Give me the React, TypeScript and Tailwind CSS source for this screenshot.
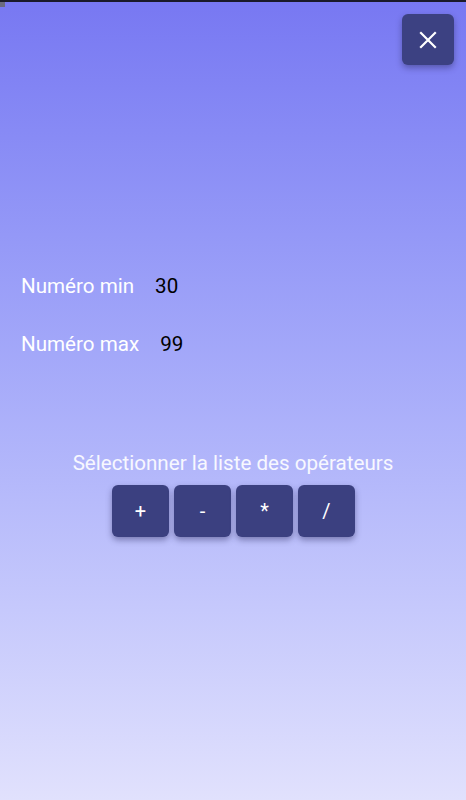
import React from "react";

export default function App() {
  const ops = ["+", "-", "*", "/"];
  return (
    <div
      className="relative w-[466px] h-[800px] overflow-hidden bg-gradient-to-b from-[#7878f2] to-[#e1e1fd] border-t-2 border-[#1a1a2a]"
      style={{ fontFamily: "Roboto, 'Noto Sans', sans-serif" }}
    >
      <div className="absolute left-0 top-0 w-[5px] h-[5px] bg-[#6b6b80]" />
      <div className="flex justify-end pt-[12px] pr-[12px]">
        <button className="w-[52px] h-[51px] rounded-[6px] bg-[#3c4182] shadow-[0_3px_6px_rgba(40,40,90,0.45)] flex items-center justify-center">
          <svg width="20" height="20" viewBox="0 0 20 20" fill="none" stroke="white" strokeWidth="2.2" strokeLinecap="square">
            <path d="M3 3 L17 17 M17 3 L3 17" />
          </svg>
        </button>
      </div>
      <div className="mt-[209px] pl-[21px] text-[20.6px] leading-[24px]">
        <div className="flex items-center">
          <span className="text-white">Numéro min</span>
          <span className="text-black ml-[21px]">30</span>
        </div>
        <div className="flex items-center mt-[34px]">
          <span className="text-white">Numéro max</span>
          <span className="text-black ml-[21px]">99</span>
        </div>
      </div>
      <div className="mt-[95px] flex flex-col items-center">
        <div className="text-[20.6px] leading-[24px] text-white/90">Sélectionner la liste des opérateurs</div>
        <div className="flex gap-[5px] mt-[10px] pl-[1px]">
          {ops.map((o) => (
            <button
              key={o}
              className="w-[57px] h-[52px] rounded-[6px] bg-[#3b4080] text-white text-[20px] shadow-[0_3px_6px_rgba(40,40,90,0.45)] flex items-center justify-center"
            >
              {o}
            </button>
          ))}
        </div>
      </div>
    </div>
  );
}
